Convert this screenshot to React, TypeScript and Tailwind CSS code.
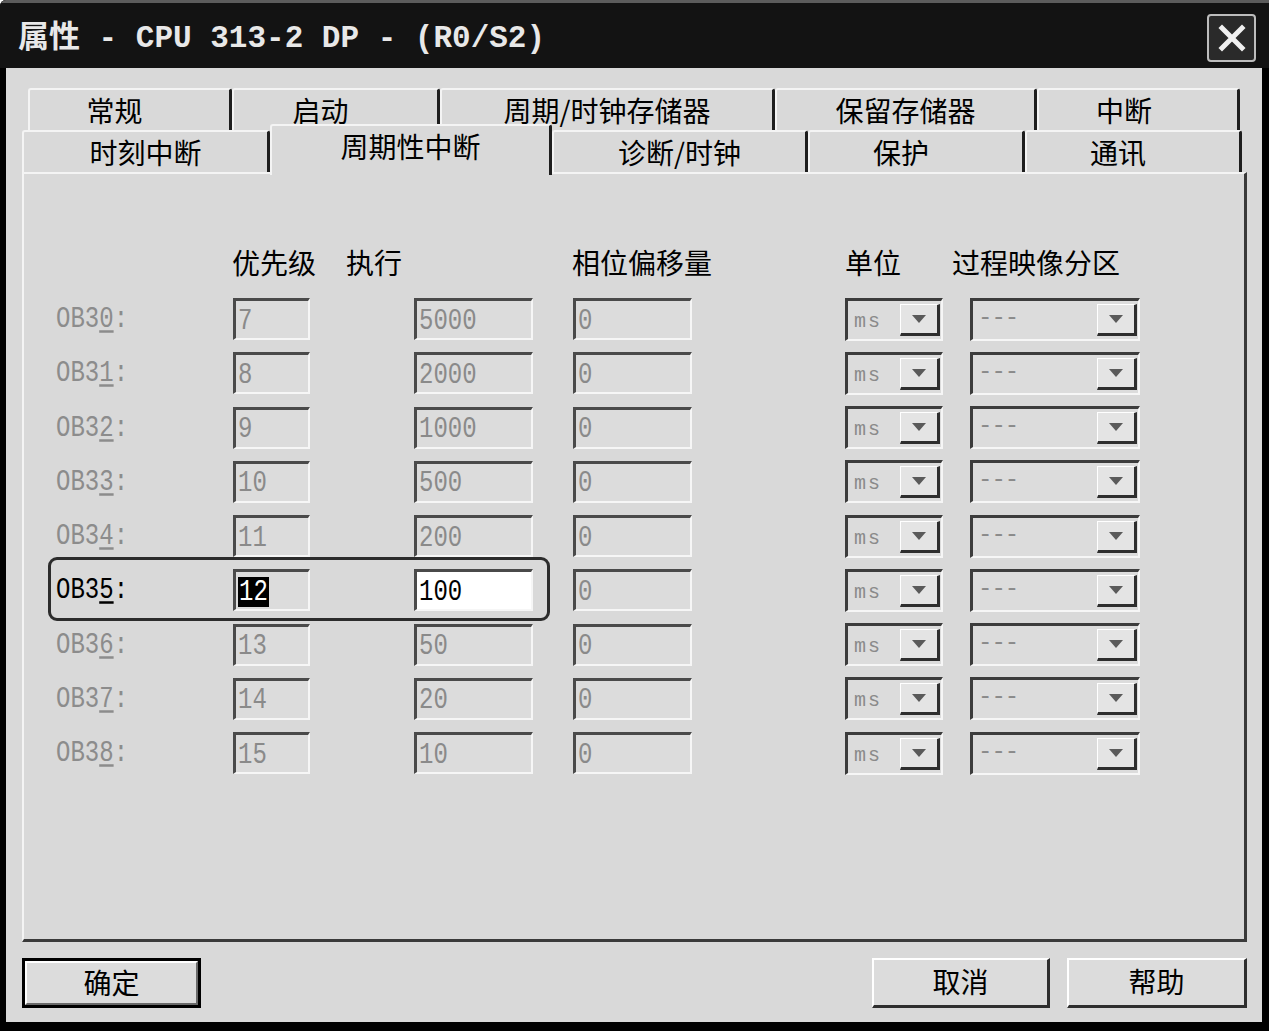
import React from 'react';

const cjk = "font-['Noto_Sans_CJK_SC','Noto_Sans',sans-serif]";
const mono = "font-['Liberation_Mono','DejaVu_Sans_Mono',monospace]";

function Tab({ label, w, extra = '' }: { label: string; w: string; extra?: string }) {
  return (
    <div
      className={`${w} h-[42px] shrink-0 border-t-2 border-l-2 border-t-[#f4f4f4] border-l-[#f4f4f4] border-r-[3px] border-r-[#1e1e1e] rounded-t-[3px] flex items-center justify-center text-[28px] leading-none text-black ${cjk} ${extra}`}
    >
      {label}
    </div>
  );
}

function Field({ w, value, active = false, selected = false }: { w: string; value: string; active?: boolean; selected?: boolean }) {
  return (
    <div
      className={`${w} h-[42px] shrink-0 border-t-[3px] border-l-[3px] border-t-[#4a4a4a] border-l-[#4a4a4a] border-b-2 border-r-2 border-b-[#f6f6f6] border-r-[#f6f6f6] ${active ? 'bg-white' : 'bg-[#dcdcdc]'} flex items-center pl-[2px] pt-[2px]`}
    >
      <span
        className={`${mono} text-[24px] leading-[24px] inline-block scale-y-125 ${
          selected ? 'bg-black text-white px-[1px]' : active ? 'text-black' : 'text-[#8a8a8a]'
        }`}
      >
        {value}
      </span>
    </div>
  );
}

function Combo({ w, value, dash = false }: { w: string; value: string; dash?: boolean }) {
  return (
    <div className={`${w} h-[43px] shrink-0 border-t-[3px] border-l-[3px] border-t-[#3c3c3c] border-l-[#3c3c3c] border-b-2 border-r-2 border-b-[#f6f6f6] border-r-[#f6f6f6] bg-[#dcdcdc] flex items-stretch`}>
      <div
        className={`flex-1 flex items-center ${dash ? 'pl-[5px] pb-[4px] text-[24px] tracking-[-1px]' : 'pl-[6px] pt-[4px] text-[20px] tracking-[2px]'} text-[#8a8a8a] ${mono}`}
      >
        {value}
      </div>
      <div className="w-[40px] my-[3px] mr-[1px] bg-[#e4e4e4] border-t border-l border-t-white border-l-white border-b-[3px] border-r-[3px] border-b-[#2e2e2e] border-r-[#2e2e2e] flex items-center justify-center">
        <div className="w-0 h-0 border-l-[7px] border-r-[7px] border-t-[8px] border-l-transparent border-r-transparent border-t-[#5a5a5a]" />
      </div>
    </div>
  );
}

const rows = [
  ['0', '7', '5000'],
  ['1', '8', '2000'],
  ['2', '9', '1000'],
  ['3', '10', '500'],
  ['4', '11', '200'],
  ['5', '12', '100'],
  ['6', '13', '50'],
  ['7', '14', '20'],
  ['8', '15', '10'],
];

function Button({ label, w, def = false }: { label: string; w: string; def?: boolean }) {
  if (def) {
    return (
      <div className={`${w} h-[50px] border-[3px] border-black bg-[#dcdcdc] flex`}>
        <div className={`flex-1 border-t-2 border-l-2 border-t-white border-l-white border-b-2 border-r-2 border-b-[#6a6a6a] border-r-[#6a6a6a] flex items-center justify-center pb-[3px] text-[28px] leading-none text-black ${cjk}`}>
          {label}
        </div>
      </div>
    );
  }
  return (
    <div className={`${w} h-[50px] border-t-2 border-l-2 border-t-white border-l-white border-b-[3px] border-r-[3px] border-b-[#2e2e2e] border-r-[#2e2e2e] bg-[#dcdcdc] flex items-center justify-center pb-[3px] text-[28px] leading-none text-black ${cjk}`}>
      {label}
    </div>
  );
}

export default function App() {
  return (
    <div className="w-[1269px] h-[1031px] bg-black flex flex-col overflow-hidden rounded-tl-[6px]">
      {/* Title bar */}
      <div className="h-[68px] shrink-0 bg-[#131313] border-t-[3px] border-t-[#5c5c5c] flex items-center justify-between pl-[18px] pr-[13px]">
        <div className={`text-[31px] font-bold text-[#e8e8e8] leading-none pt-[6px] ${"font-['Liberation_Mono','Noto_Sans_CJK_SC',monospace]"}`}>
          属性 - CPU 313-2 DP - (R0/S2)
        </div>
        <div className="w-[49px] h-[48px] mt-[5px] rounded-[4px] border-2 border-[#bdbdbd] bg-[#2a2a2a] flex items-center justify-center">
          <svg width="30" height="30" viewBox="0 0 30 30">
            <path d="M5 5 L25 25 M25 5 L5 25" stroke="#f0f0f0" strokeWidth="5" strokeLinecap="square" />
          </svg>
        </div>
      </div>

      {/* Body */}
      <div className="flex-1 ml-[6px] mr-[7px] mb-[9px] bg-[#d9d9d9] pt-[20px] pl-[16px] pr-[15px] pb-[14px] flex flex-col">
        {/* Tabs row 1 */}
        <div className="flex ml-[6px] h-[42px]">
          <Tab label="常规" w="w-[204px]" extra="pr-[30px]" />
          <Tab label="启动" w="w-[208px]" extra="pr-[30px]" />
          <Tab label="周期/时钟存储器" w="w-[335px]" />
          <Tab label="保留存储器" w="w-[262px]" />
          <Tab label="中断" w="w-[203px]" extra="pr-[28px]" />
        </div>
        {/* Tabs row 2 */}
        <div className="flex items-end h-[42px] relative z-10">
          <Tab label="时刻中断" w="w-[248px]" extra="border-r-0" />
          <div
            className={`w-[282px] h-[51px] mb-[-3px] shrink-0 bg-[#d9d9d9] border-t-2 border-l-2 border-t-[#f4f4f4] border-l-[#f4f4f4] border-r-[3px] border-r-[#1e1e1e] rounded-t-[3px] flex items-start justify-center pt-[6px] text-[28px] leading-none text-black ${cjk}`}
          >
            周期性中断
          </div>
          <Tab label="诊断/时钟" w="w-[256px]" />
          <Tab label="保护" w="w-[217px]" extra="pr-[30px]" />
          <Tab label="通讯" w="w-[217px]" extra="pr-[30px]" />
        </div>

        {/* Panel */}
        <div className="h-[770px] shrink-0 border-t-2 border-l-2 border-t-[#f4f4f4] border-l-[#f4f4f4] border-b-[3px] border-r-[3px] border-b-[#3a3a3a] border-r-[#3a3a3a] flex flex-col">
          <div className={`mt-[70px] h-[36px] flex items-center pl-[208px] text-[28px] text-black leading-none ${cjk}`}>
            <span className="w-[114px] shrink-0">优先级</span>
            <span className="w-[226px] shrink-0">执行</span>
            <span className="w-[273px] shrink-0">相位偏移量</span>
            <span className="w-[107px] shrink-0">单位</span>
            <span className="shrink-0">过程映像分区</span>
          </div>
          <div className="mt-[12px] flex flex-col">
            {rows.map(([d, prio, exec]) => {
              const active = d === '5';
              return (
                <div key={d} className="h-[54.25px] flex items-center pl-[32px] relative">
                  {active && (
                    <div className="absolute left-[24px] top-[-6px] w-[502px] h-[64px] border-[3px] border-[#2c2c2c] rounded-[9px] pointer-events-none z-10" />
                  )}
                  <div className={`w-[177px] shrink-0 ${mono} text-[24px] ${active ? 'text-black' : 'text-[#8c8c8c]'}`}>
                    <span className="inline-block scale-y-125">
                      OB3<span className="underline underline-offset-[3px]">{d}</span>:
                    </span>
                  </div>
                  <Field w="w-[77px]" value={prio} selected={active} />
                  <div className="w-[104px] shrink-0" />
                  <Field w="w-[119px]" value={exec} active={active} />
                  <div className="w-[40px] shrink-0" />
                  <Field w="w-[119px]" value="0" />
                  <div className="w-[153px] shrink-0" />
                  <Combo w="w-[98px]" value="ms" />
                  <div className="w-[27px] shrink-0" />
                  <Combo w="w-[170px]" value="---" dash />
                </div>
              );
            })}
          </div>
        </div>

        {/* Buttons */}
        <div className="mt-[16px] flex items-center">
          <Button label="确定" w="w-[179px]" def />
          <div className="flex-1" />
          <Button label="取消" w="w-[178px]" />
          <div className="w-[17px]" />
          <Button label="帮助" w="w-[180px]" />
        </div>
      </div>
    </div>
  );
}
